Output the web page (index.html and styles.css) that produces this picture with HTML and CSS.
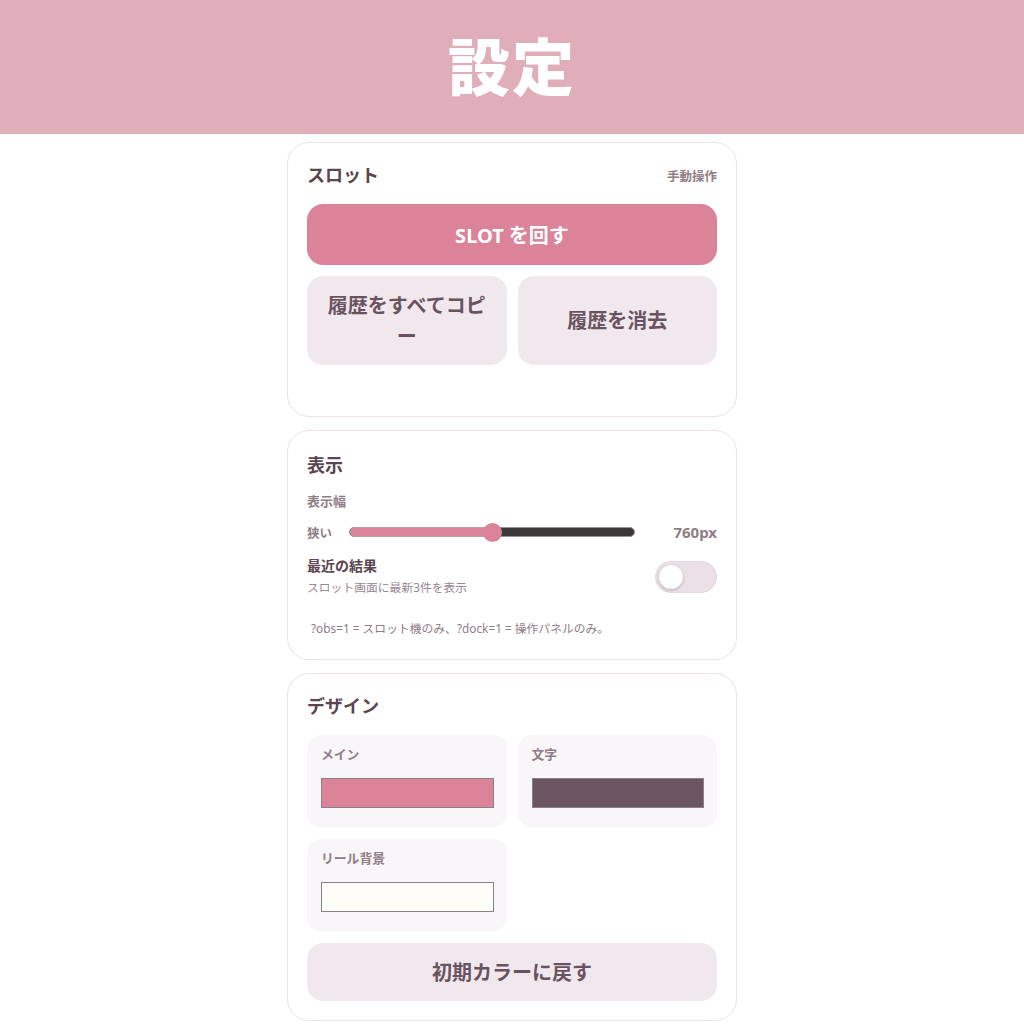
FILE: index.html
```html
<!DOCTYPE html>
<html lang="ja">
<head>
<meta charset="utf-8">
<title>設定</title>
<link rel="stylesheet" href="styles.css">
</head>
<body>
<header class="topbar"><h1 class="topbar-title">設定</h1></header>
<main class="panel">
  <section class="card">
    <div class="card-head">
      <h2 class="card-title">スロット</h2>
      <span class="card-note">手動操作</span>
    </div>
    <button class="btn btn-primary">SLOT を回す</button>
    <div class="btn-row">
      <button class="btn btn-soft">履歴をすべてコピー</button>
      <button class="btn btn-soft">履歴を消去</button>
    </div>
    <div class="status"></div>
  </section>

  <section class="card card-display">
    <h2 class="card-title">表示</h2>
    <div class="field-label">表示幅</div>
    <div class="slider-row">
      <span class="slider-min">狭い</span>
      <div class="slider">
        <div class="slider-fill" style="width:50%"></div>
        <div class="slider-thumb" style="left:50%"></div>
      </div>
      <span class="slider-value">760px</span>
    </div>
    <div class="toggle-row">
      <div class="toggle-text">
        <div class="toggle-title">最近の結果</div>
        <div class="toggle-sub">スロット画面に最新3件を表示</div>
      </div>
      <div class="toggle"><div class="toggle-knob"></div></div>
    </div>
    <p class="hint">?obs=1 = スロット機のみ、?dock=1 = 操作パネルのみ。</p>
  </section>

  <section class="card">
    <h2 class="card-title">デザイン</h2>
    <div class="color-grid">
      <div class="color-tile">
        <div class="field-label">メイン</div>
        <div class="swatch swatch-main"></div>
      </div>
      <div class="color-tile">
        <div class="field-label">文字</div>
        <div class="swatch swatch-text"></div>
      </div>
      <div class="color-tile">
        <div class="field-label">リール背景</div>
        <div class="swatch swatch-reel"></div>
      </div>
    </div>
    <button class="btn btn-soft btn-reset">初期カラーに戻す</button>
  </section>
</main>
</body>
</html>
```
FILE: styles.css
```css
* { box-sizing: border-box; }
body {
  margin: 0;
  background: #ffffff;
  font-family: "Noto Sans", "Noto Sans CJK JP", sans-serif;
  color: #5e4852;
}
.topbar {
  height: 134px;
  background: #dfaeb9;
  display: flex;
  align-items: center;
  justify-content: center;
}
.topbar-title {
  margin: 0;
  color: #ffffff;
  font-size: 62px;
  font-weight: 900;
  letter-spacing: 2px;
  line-height: 1;
}
.panel {
  width: 450px;
  margin: 8px auto 0;
  display: flex;
  flex-direction: column;
  gap: 13px;
}
.card {
  border: 1px solid #ece2e6;
  border-radius: 22px;
  padding: 19px;
  background: #fff;
}
.card-display {
  padding-top: 21px;
  padding-bottom: 23px;
}
.card-head {
  display: flex;
  justify-content: space-between;
  align-items: center;
}
.card-title {
  margin: 0;
  font-size: 18px;
  line-height: 26px;
  font-weight: 700;
  color: #5a4550;
}
.card-note {
  font-size: 12.5px;
  font-weight: 700;
  color: #8f7c85;
}
.btn {
  font-family: inherit;
  border: none;
  font-weight: 700;
  cursor: pointer;
  display: block;
  width: 100%;
}
.btn-primary {
  margin-top: 16px;
  height: 61px;
  border-radius: 16px;
  background: #db8399;
  color: #ffffff;
  font-size: 20px;
}
.btn-row {
  margin-top: 11px;
  display: grid;
  grid-template-columns: 1fr 1fr;
  gap: 11px;
}
.btn-soft {
  background: #f0e8ec;
  color: #6a5360;
  border-radius: 16px;
  font-size: 20px;
  line-height: 31px;
}
.btn-row .btn-soft {
  height: 89px;
  padding: 0 12px;
}
.status {
  height: 32px;
}
.field-label {
  margin-top: 14px;
  font-size: 13px;
  line-height: 18px;
  font-weight: 700;
  color: #8f7c85;
}
.slider-row {
  margin-top: 10px;
  height: 24px;
  display: flex;
  align-items: center;
}
.slider-min {
  font-size: 12.5px;
  font-weight: 700;
  color: #8f7c85;
  width: 42px;
}
.slider {
  position: relative;
  flex: 1;
  height: 10px;
  border-radius: 5px;
  background: #3b3839;
  border: 1px solid #9a9396;
}
.slider-fill {
  position: absolute;
  left: 0;
  top: -1px;
  bottom: -1px;
  border-radius: 5px;
  background: #db8399;
  border: 1px solid #b3a0a8;
}
.slider-thumb {
  position: absolute;
  top: 50%;
  width: 19px;
  height: 19px;
  margin: -9.5px 0 0 -9.5px;
  border-radius: 50%;
  background: #db8399;
}
.slider-value {
  width: 82px;
  text-align: right;
  font-size: 15px;
  font-weight: 700;
  color: #8f7c85;
}
.toggle-row {
  margin-top: 13px;
  display: flex;
  align-items: center;
  justify-content: space-between;
}
.toggle-title {
  font-size: 14px;
  line-height: 18px;
  font-weight: 700;
  color: #5a4550;
}
.toggle-sub {
  margin-top: 3px;
  font-size: 11.8px;
  line-height: 18px;
  color: #9a8790;
}
.toggle {
  width: 62px;
  height: 32px;
  border-radius: 16px;
  background: #ebe0e5;
  border: 1px solid #e2d6dc;
  padding: 3px;
}
.toggle-knob {
  width: 24px;
  height: 24px;
  border-radius: 50%;
  background: #ffffff;
  box-shadow: 0 1px 3px rgba(90, 60, 75, 0.35);
}
.hint {
  margin: 24px 0 0 4px;
  font-size: 11.8px;
  line-height: 16px;
  color: #8f7c85;
}
.color-grid {
  margin-top: 16px;
  display: grid;
  grid-template-columns: 1fr 1fr;
  gap: 12px 11px;
}
.color-tile {
  background: #f9f6f9;
  border-radius: 14px;
  padding: 0 13px 18px 14px;
  height: 92px;
}
.color-tile .field-label {
  margin-top: 10px;
  font-size: 12.8px;
}
.swatch {
  margin-top: 15px;
  height: 30px;
  border: 1px solid #8c7f85;
}
.swatch-main { background: #db8399; }
.swatch-text { background: #6b5560; }
.swatch-reel { background: #fffdf8; }
.btn-reset {
  margin-top: 12px;
  height: 58px;
}
```
